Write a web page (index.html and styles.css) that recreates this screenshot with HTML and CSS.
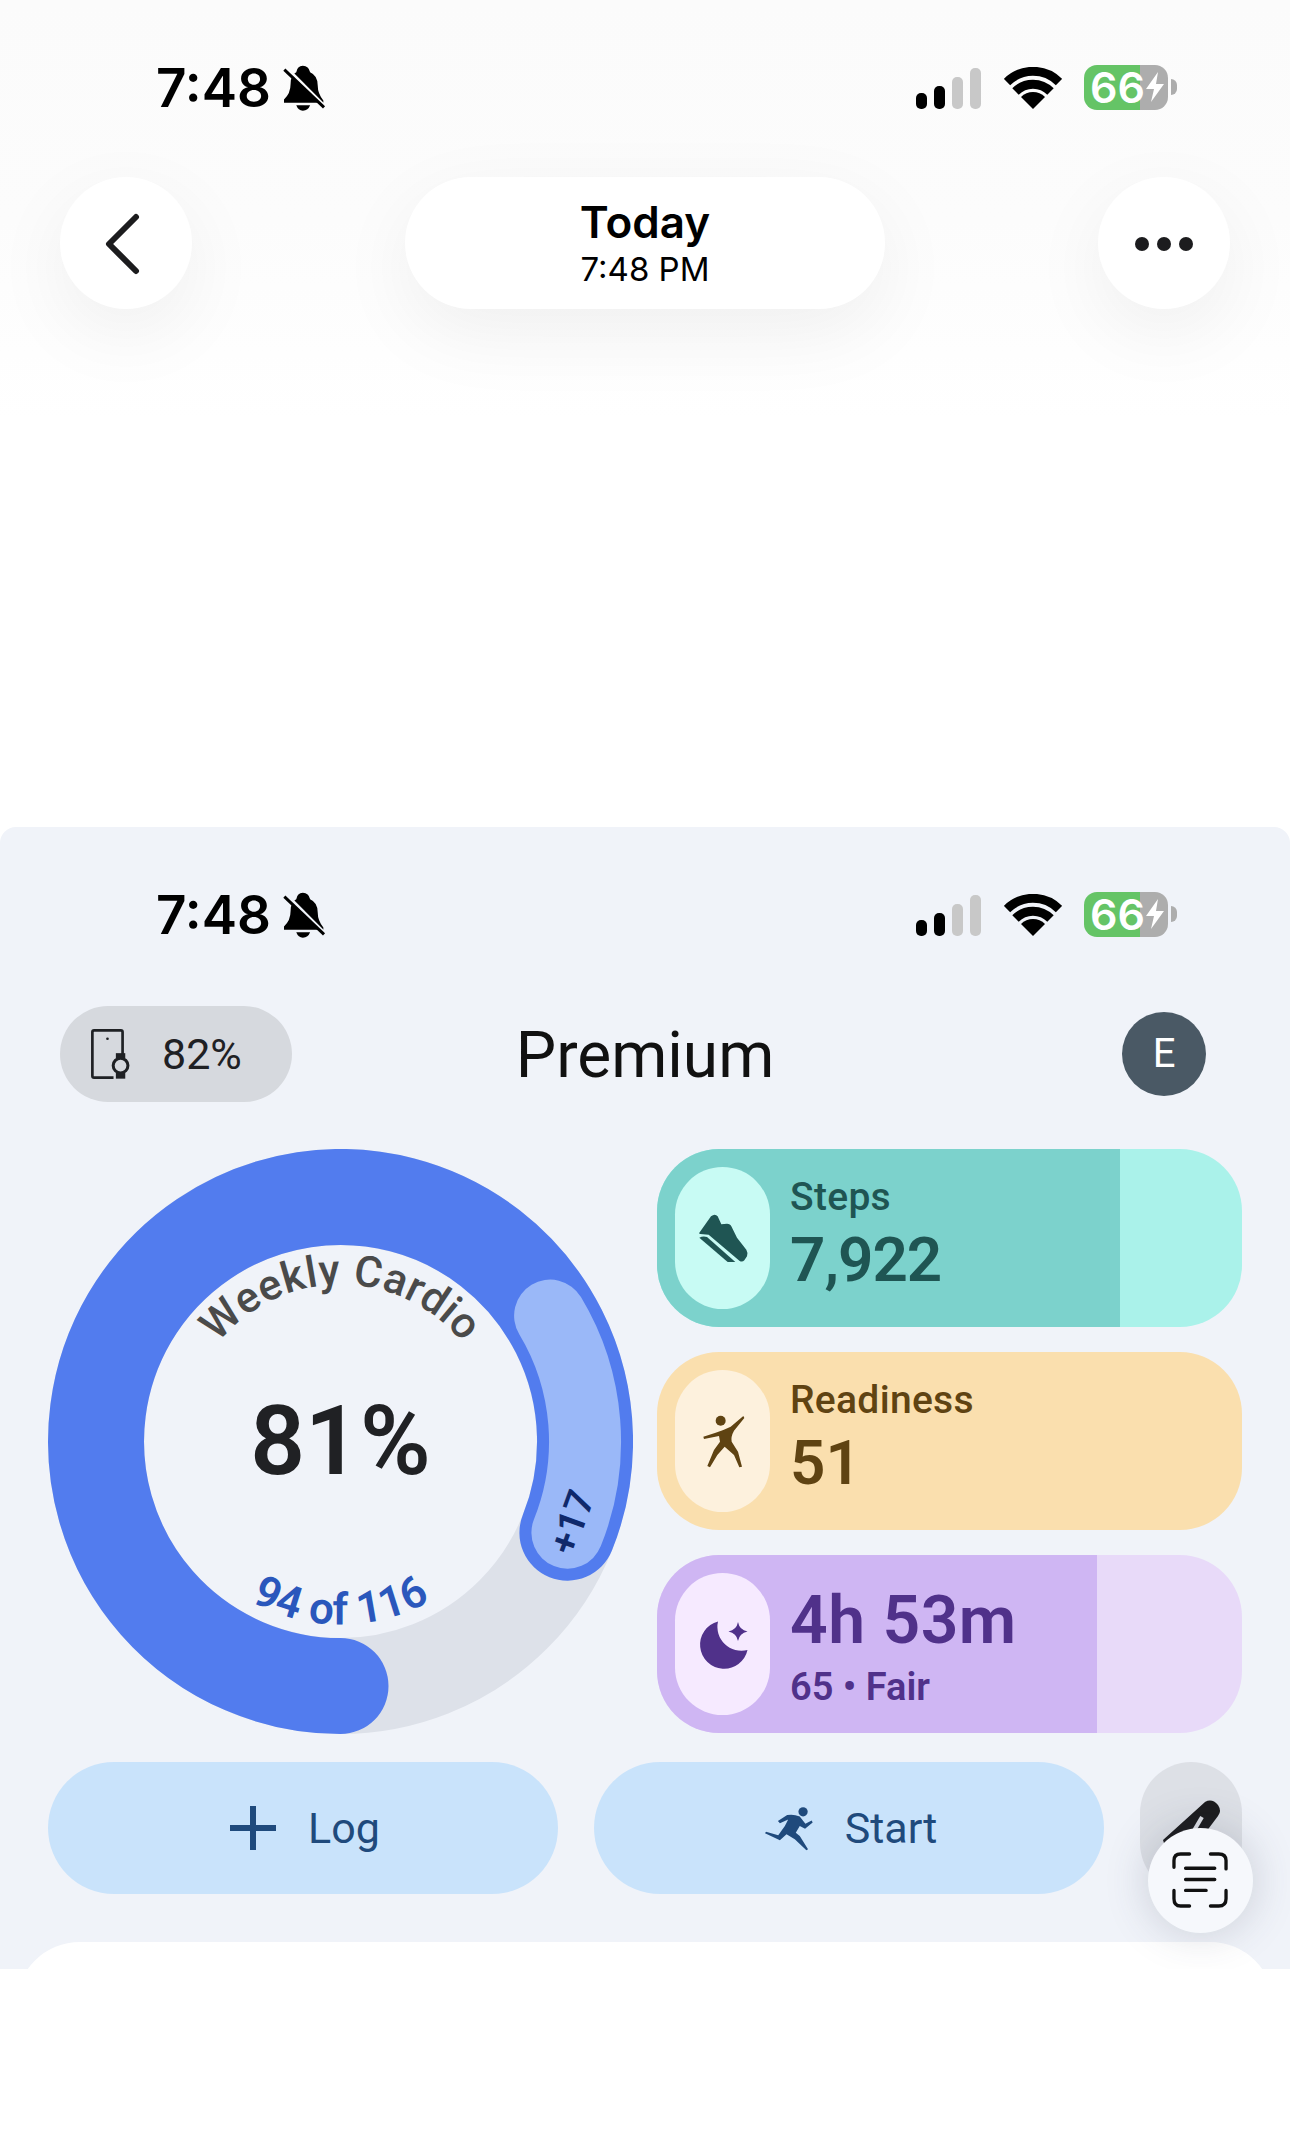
FILE: index.html
```html
<!DOCTYPE html>
<html>
<head>
  <title>Today</title>
  <meta charset="UTF-8">
  <link rel="stylesheet" href="styles.css">
</head>
<body>

<!-- shared status bar icons -->
<svg class="icon-defs">
  <symbol id="bell" viewBox="400 25 130 145">
    <path d="M460 30Q478 30 482 50Q505 60 505 90Q505 115 522 135V142H403V132Q423 115 423 85Q423 58 440 50Q443 30 460 30Z"/>
    <path d="M440 150H482Q476 166 460 166Q446 166 440 150Z"/>
    <path class="bell-gap" d="M404 30L524 150"/>
    <path class="bell-slash" d="M404 42L524 156"/>
  </symbol>
  <symbol id="signal" viewBox="0 0 66 41">
    <rect x="0" y="25" width="11" height="16" rx="5"/>
    <rect x="18" y="18" width="11" height="23" rx="5"/>
    <rect class="signal-off" x="36" y="9" width="11" height="32" rx="5"/>
    <rect class="signal-off" x="54" y="0" width="11" height="41" rx="5"/>
  </symbol>
  <symbol id="wifi" viewBox="0 0 58 42">
    <path class="wifi-band" d="M3 15A37 37 0 0 1 55 15"/>
    <path class="wifi-band" d="M11.500 24.500A24.500 24.500 0 0 1 46.500 24.500"/>
    <path d="M29 42L17 30A17 17 0 0 1 41 30Z"/>
  </symbol>
  <symbol id="bolt" viewBox="0 0 20 30">
    <path d="M13 0L1 17H9L6 30L19 12H11Z"/>
  </symbol>
</svg>

<section class="top-screen">
  <div class="status-bar">
    <div class="status-left">
      <span class="status-time">7:48</span>
      <svg class="status-bell"><use href="#bell"/></svg>
    </div>
    <div class="status-right">
      <svg class="status-signal"><use href="#signal"/></svg>
      <svg class="status-wifi"><use href="#wifi"/></svg>
      <div class="battery">
        <div class="battery-body">
          <span class="battery-level">66</span>
          <svg class="battery-bolt"><use href="#bolt"/></svg>
        </div>
        <span class="battery-nub"></span>
      </div>
    </div>
  </div>

  <div class="nav-row">
    <button class="nav-btn">
      <svg class="nav-back" viewBox="0 0 36 62"><path d="M32 4L5 31L32 58"/></svg>
    </button>
    <div class="nav-title">
      <div class="nav-title-main">Today</div>
      <div class="nav-title-sub">7:48 PM</div>
    </div>
    <button class="nav-btn">
      <span class="dot"></span><span class="dot"></span><span class="dot"></span>
    </button>
  </div>
</section>

<section class="app-screen">
  <div class="status-bar">
    <div class="status-left">
      <span class="status-time">7:48</span>
      <svg class="status-bell"><use href="#bell"/></svg>
    </div>
    <div class="status-right">
      <svg class="status-signal"><use href="#signal"/></svg>
      <svg class="status-wifi"><use href="#wifi"/></svg>
      <div class="battery">
        <div class="battery-body">
          <span class="battery-level">66</span>
          <svg class="battery-bolt"><use href="#bolt"/></svg>
        </div>
        <span class="battery-nub"></span>
      </div>
    </div>
  </div>

  <header class="app-header">
    <div class="device-pill">
      <svg class="device-icon" viewBox="90 85 125 155">
        <path class="device-line" d="M160 233H102Q97 233 97 228V97Q97 92 102 92H182Q187 92 187 97V165"/>
        <circle class="device-fill" cx="142" cy="117" r="4"/>
        <circle class="device-watch" cx="181" cy="197" r="22"/>
        <rect class="device-fill" x="167" y="160" width="28" height="16"/>
        <rect class="device-fill" x="167" y="218" width="28" height="18"/>
      </svg>
      <span class="device-level">82%</span>
    </div>
    <h1 class="app-title">Premium</h1>
    <div class="avatar">E</div>
  </header>

  <div class="stats">
    <svg class="ring" viewBox="0 0 585 585">
      <defs>
        <path id="ring-top" d="M135.500 292.500A157 157 0 0 1 449.500 292.500"/>
        <path id="ring-bottom" d="M109.500 292.500A183 183 0 0 0 475.500 292.500"/>
      </defs>
      <circle class="ring-track" cx="292.500" cy="292.500" r="244.500"/>
      <path class="ring-progress" d="M292.500 537A244.500 244.500 0 1 1 519.400 383.700"/>
      <path class="ring-bonus" d="M502.100 166.600A244.500 244.500 0 0 1 519.400 383.700"/>
      <text class="ring-label"><textPath href="#ring-top" startOffset="50%">Weekly Cardio</textPath></text>
      <text class="ring-count"><textPath href="#ring-bottom" startOffset="50%">94 of 116</textPath></text>
      <text class="ring-extra" transform="translate(524 373) rotate(-70)">+17</text>
      <text class="ring-percent" x="292.500" y="325">81%</text>
    </svg>

    <div class="metrics">
      <div class="metric metric-steps">
        <div class="metric-fill" style="width: 79.1%"></div>
        <div class="metric-icon">
          <svg viewBox="38 23 180 180">
            <path d="M57 112Q68 106 80 110L165 185H142Z"/>
            <path d="M57 97L92 48Q104 38 112 48L123 72L140 70Q150 70 153 78L170 112L198 148Q204 158 200 168L192 180Q186 186 178 182L85 103L60 101Q54 100 57 97Z"/>
          </svg>
        </div>
        <div class="metric-text">
          <div class="metric-label">Steps</div>
          <div class="metric-value">7,922</div>
        </div>
      </div>

      <div class="metric metric-readiness">
        <div class="metric-icon">
          <svg viewBox="37 33 180 180">
            <circle cx="120" cy="62" r="15"/>
            <path d="M68 110L105 98Q125 92 150 80L188 48L191 54L160 92Q150 110 153 125L172 155L184 200L176 202L160 165L132 140L110 165L88 202L80 198L100 150L118 125L115 108L70 117Z"/>
          </svg>
        </div>
        <div class="metric-text">
          <div class="metric-label">Readiness</div>
          <div class="metric-value">51</div>
        </div>
      </div>

      <div class="metric metric-sleep">
        <div class="metric-fill" style="width: 75.2%"></div>
        <div class="metric-icon">
          <svg viewBox="0 0 60 60">
            <path d="M25 7.500A24 24 0 1 0 54.500 36A24 24 0 0 1 25 7.500Z"/>
            <path d="M45 8Q46.500 16 54.500 17.500Q46.500 19 45 27Q43.500 19 35.500 17.500Q43.500 16 45 8Z"/>
          </svg>
        </div>
        <div class="metric-text">
          <div class="metric-value">4h 53m</div>
          <div class="metric-sub">65 • Fair</div>
        </div>
      </div>
    </div>
  </div>

  <div class="actions">
    <button class="action-btn">
      <svg class="action-plus" viewBox="0 0 46 44"><path d="M23 0V44M0 22H46"/></svg>
      <span>Log</span>
    </button>
    <button class="action-btn">
      <svg class="action-run" viewBox="45 45 145 135">
        <circle cx="160" cy="62" r="14"/>
        <path d="M84 90L112 72Q130 68 150 76L167 98L186 88L189 94L166 113L150 105L138 125L150 135L175 175L170 178L135 145L110 130L90 148L45 127L48 122L85 133L105 105L115 85L90 97Z"/>
      </svg>
      <span>Start</span>
    </button>
    <button class="action-edit">
      <svg viewBox="0 0 102 132">
        <path class="pen-body" d="M23 78L65 40Q72 36 78 43Q82 49 78 54L60 78L30 100Z"/>
        <path class="pen-notch" d="M62 55L52 72"/>
      </svg>
    </button>
  </div>

  <div class="sheet"></div>

  <button class="scan-btn">
    <svg viewBox="150 300 190 190">
      <path d="M165 355V335Q165 315 185 315H212M275 315H300Q322 315 322 335V360M165 425V450Q165 472 185 472H212M275 472H300Q322 472 322 450V425"/>
      <path d="M200 358H288M200 392H288M200 425H262"/>
    </svg>
  </button>
</section>

</body>
</html>
```

FILE: styles.css
```css
* {
  box-sizing: border-box;
}

body {
  margin: 0;
  background-color: #fff;
  font-family: Roboto, "Noto Sans", sans-serif;
}

button {
  padding: 0;
  border: none;
  font-family: inherit;
  cursor: pointer;
}

.icon-defs {
  display: none;
}

/* Top screenshot */
.top-screen {
  --status-gap: #fcfcfc;
  height: 827px;
  padding-top: 64px;
  background: linear-gradient(#fbfbfb, #fcfcfc 220px, #fff 420px);
}

/* Status bar, used on both screenshots */
.status-bar {
  display: flex;
  align-items: center;
  justify-content: space-between;
  height: 48px;
  padding: 0 113px 0 156px;
  font-family: Inter, sans-serif;
  color: #000;
}

.status-left,
.status-right {
  display: flex;
  align-items: center;
}

.status-time {
  font-size: 53px;
  font-weight: 600;
  line-height: 48px;
}

.status-bell {
  width: 43px;
  height: 48px;
  margin-left: 12px;
  fill: #000;
}

.bell-gap {
  fill: none;
  stroke: var(--status-gap);
  stroke-width: 9;
}

.bell-slash {
  fill: none;
  stroke: #000;
  stroke-width: 9;
}

.status-right {
  gap: 22px;
}

.status-signal {
  width: 66px;
  height: 41px;
  fill: #000;
}

.signal-off {
  fill: #c8c8c8;
}

.status-wifi {
  width: 58px;
  height: 42px;
  fill: #000;
  margin-bottom: 1px;
}

.wifi-band {
  fill: none;
  stroke: #000;
  stroke-width: 9;
}

.battery {
  display: flex;
  align-items: center;
  gap: 3px;
  margin-top: -2px;
}

.battery-body {
  display: flex;
  align-items: center;
  width: 84px;
  height: 45px;
  padding-left: 6px;
  border-radius: 13px;
  background: linear-gradient(90deg, #65c466 56px, #adadad 56px);
  color: #fff;
}

.battery-level {
  font-size: 43px;
  font-weight: 600;
  line-height: 45px;
}

.battery-bolt {
  width: 20px;
  height: 30px;
  fill: #fff;
}

.battery-nub {
  width: 6px;
  height: 16px;
  border-radius: 0 8px 8px 0;
  background-color: #adadad;
}

/* Nav row */
.nav-row {
  display: flex;
  justify-content: space-between;
  margin-top: 65px;
  padding: 0 60px;
}

.nav-btn {
  display: flex;
  align-items: center;
  justify-content: center;
  gap: 8px;
  width: 132px;
  height: 132px;
  padding-top: 2px;
  border-radius: 50%;
  background-color: #fff;
  box-shadow: 0 24px 80px rgba(0, 0, 0, 0.06);
}

.nav-back {
  width: 36px;
  height: 62px;
  margin-right: 8px;
  fill: none;
  stroke: #1c1c1e;
  stroke-width: 6;
  stroke-linecap: round;
  stroke-linejoin: round;
}

.dot {
  width: 14px;
  height: 14px;
  border-radius: 50%;
  background-color: #1c1c1e;
}

.nav-title {
  display: flex;
  flex-direction: column;
  align-items: center;
  justify-content: center;
  width: 480px;
  height: 132px;
  padding-top: 2px;
  border-radius: 66px;
  background-color: #fff;
  box-shadow: 0 24px 80px rgba(0, 0, 0, 0.06);
  font-family: Inter, sans-serif;
  color: #000;
}

.nav-title-main {
  font-size: 44px;
  font-weight: 600;
  line-height: 50px;
}

.nav-title-sub {
  font-size: 33px;
  line-height: 44px;
}

/* App screenshot */
.app-screen {
  --status-gap: #f0f3f9;
  position: relative;
  height: 1142px;
  padding-top: 64px;
  overflow: hidden;
  border-radius: 16px 16px 0 0;
  background-color: #f0f3f9;
}

.app-header {
  display: grid;
  grid-template-columns: 1fr auto 1fr;
  align-items: center;
  margin-top: 67px;
  padding: 0 60px;
}

.device-pill {
  display: flex;
  align-items: center;
  gap: 30px;
  justify-self: start;
  width: 232px;
  height: 96px;
  padding-left: 30px;
  border-radius: 48px;
  background-color: #d6d9de;
}

.device-icon {
  width: 42px;
  height: 52px;
}

.device-line {
  fill: none;
  stroke: #1f2124;
  stroke-width: 8;
}

.device-fill {
  fill: #1f2124;
}

.device-watch {
  fill: none;
  stroke: #1f2124;
  stroke-width: 9;
}

.device-level {
  font-size: 43px;
  color: #1f2124;
}

.app-title {
  margin: 2px 0 0;
  font-size: 64px;
  font-weight: 400;
  color: #111;
}

.avatar {
  justify-self: end;
  width: 84px;
  height: 84px;
  margin-right: 24px;
  border-radius: 50%;
  background-color: #4a5965;
  font-size: 40px;
  line-height: 84px;
  text-align: center;
  color: #fff;
}

.stats {
  display: flex;
  gap: 24px;
  margin-top: 47px;
  padding: 0 48px;
}

/* Cardio ring */
.ring {
  flex: none;
  width: 585px;
  height: 585px;
}

.ring-track {
  fill: none;
  stroke: #dde1e9;
  stroke-width: 96;
}

.ring-progress {
  fill: none;
  stroke: #527cee;
  stroke-width: 96;
  stroke-linecap: round;
}

.ring-bonus {
  fill: none;
  stroke: #9ab8f8;
  stroke-width: 72;
  stroke-linecap: round;
}

.ring-label {
  font-size: 43px;
  font-weight: 500;
  fill: #4a4a4a;
  text-anchor: middle;
  letter-spacing: 0.5px;
}

.ring-count {
  font-size: 44px;
  font-weight: 600;
  fill: #2a57bc;
  text-anchor: middle;
}

.ring-extra {
  font-size: 38px;
  font-weight: 600;
  fill: #10296b;
  text-anchor: middle;
  dominant-baseline: central;
}

.ring-percent {
  font-size: 96px;
  font-weight: 600;
  fill: #202124;
  text-anchor: middle;
}

/* Metric cards */
.metrics {
  display: flex;
  flex: 1;
  flex-direction: column;
  gap: 25px;
}

.metric {
  position: relative;
  display: flex;
  align-items: center;
  gap: 20px;
  height: 178px;
  padding: 0 18px;
  overflow: hidden;
  border-radius: 62px;
}

.metric-fill {
  position: absolute;
  top: 0;
  bottom: 0;
  left: 0;
}

.metric-icon {
  position: relative;
  display: flex;
  flex: none;
  align-items: center;
  justify-content: center;
  width: 95px;
  height: 142px;
  border-radius: 48px;
}

.metric-icon svg {
  width: 60px;
  height: 60px;
}

.metric-text {
  position: relative;
  padding-bottom: 6px;
}

.metric-label {
  margin-bottom: 4px;
  font-size: 39px;
  font-weight: 500;
  line-height: 46px;
  letter-spacing: 0.3px;
}

.metric-value {
  font-size: 62px;
  font-weight: 600;
  line-height: 72px;
}

.metric-sub {
  margin-top: 6px;
  font-size: 38px;
  font-weight: 600;
  line-height: 48px;
}

.metric-steps {
  background-color: #aaf2ea;
  color: #1f5553;
}

.metric-steps .metric-fill {
  background-color: #7cd2cc;
}

.metric-steps .metric-icon {
  background-color: #c8fbf4;
  fill: #1f5553;
}

.metric-steps .metric-value {
  letter-spacing: -1px;
}

.metric-readiness {
  background-color: #fadfae;
  color: #5f4312;
}

.metric-readiness .metric-icon {
  background-color: #fdf1dd;
  fill: #5f4312;
}

.metric-sleep {
  background-color: #e8daf9;
  color: #50318a;
}

.metric-sleep .metric-fill {
  background-color: #cfb6f3;
}

.metric-sleep .metric-icon {
  background-color: #f6eaff;
  fill: #50318a;
}

.metric-sleep .metric-text {
  padding: 8px 0 0;
}

.metric-sleep .metric-value {
  font-size: 66px;
  letter-spacing: 0.5px;
}

/* Buttons under the stats */
.actions {
  display: flex;
  gap: 36px;
  margin-top: 28px;
  padding: 0 48px;
}

.action-btn {
  display: flex;
  align-items: center;
  justify-content: center;
  gap: 32px;
  width: 510px;
  height: 132px;
  padding-left: 4px;
  border-radius: 66px;
  background-color: #c9e3fb;
  font-size: 43px;
  color: #1f4a7c;
}

.action-plus {
  width: 46px;
  height: 44px;
  fill: none;
  stroke: #1f4a7c;
  stroke-width: 6;
}

.action-run {
  width: 48px;
  height: 45px;
  fill: #1f4a7c;
}

.action-edit {
  flex: 1;
  height: 132px;
  border-radius: 51px;
  background-color: #dde0e6;
}

.action-edit svg {
  display: block;
  width: 100%;
  height: 100%;
}

.pen-body {
  fill: #1c1c1e;
}

.pen-notch {
  fill: none;
  stroke: #dde0e6;
  stroke-width: 4;
}

.sheet {
  height: 64px;
  margin: 48px 16px 0;
  border-radius: 68px 68px 0 0;
  background-color: #fff;
}

/* Floating text-scan button */
.scan-btn {
  position: absolute;
  top: 1001px;
  right: 37px;
  display: flex;
  align-items: center;
  justify-content: center;
  width: 105px;
  height: 105px;
  border-radius: 50%;
  background-color: #f6f8fc;
  box-shadow: 0 0 44px rgba(60, 70, 90, 0.22);
}

.scan-btn svg {
  width: 63px;
  height: 63px;
  fill: none;
  stroke: #111;
  stroke-width: 10;
  stroke-linecap: round;
}
```
